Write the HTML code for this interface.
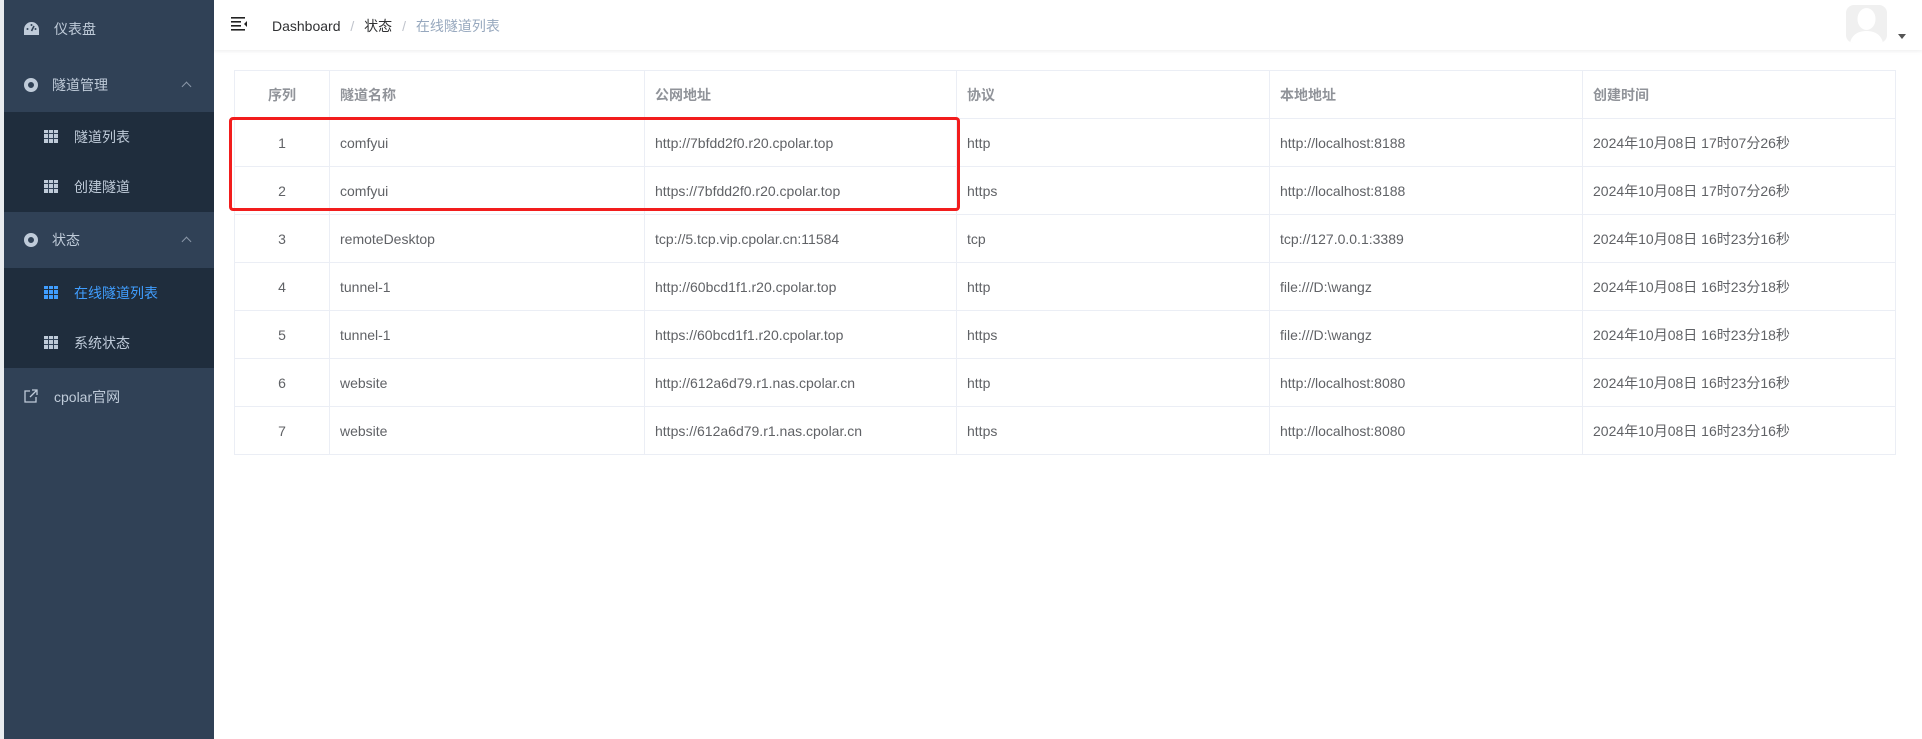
<!DOCTYPE html>
<html><head><meta charset="utf-8"><style>
*{margin:0;padding:0;box-sizing:border-box}
body{width:1922px;height:739px;background:#fff;font-family:"Liberation Sans","Noto Sans CJK SC",sans-serif;font-size:14px;position:relative;overflow:hidden}
.sb{position:absolute;left:0;top:0;width:214px;height:739px;background:#304156;border-left:4px solid #e9ecef}
.it{position:absolute;left:0;width:210px;color:#bfcbd9;height:56px;line-height:56px}
.sub{position:absolute;left:0;width:210px;background:#1f2d3d}
.sub div{height:50px;line-height:50px;color:#bfcbd9;padding-left:70px;position:relative}
.sub div i{position:absolute;left:40px;top:18px;width:14px;height:13px;background:
linear-gradient(90deg,transparent 4px,#304156 4px,#304156 5px,transparent 5px,transparent 9px,#304156 9px,#304156 10px,transparent 10px),
linear-gradient(#bfcbd9 0,#bfcbd9 3px,#304156 3px,#304156 4px,#bfcbd9 4px,#bfcbd9 8px,#304156 8px,#304156 9px,#bfcbd9 9px)}
.sub div.act{color:#409eff}
.sub div.act i{background:
linear-gradient(90deg,transparent 4px,#1f2d3d 4px,#1f2d3d 5px,transparent 5px,transparent 9px,#1f2d3d 9px,#1f2d3d 10px,transparent 10px),
linear-gradient(#409eff 0,#409eff 3px,#1f2d3d 3px,#1f2d3d 4px,#409eff 4px,#409eff 8px,#1f2d3d 8px,#1f2d3d 9px,#409eff 9px)}
.ring{position:absolute;left:20px;top:21px;width:14px;height:14px;border-radius:50%;border:4px solid #bfcbd9}
.car{position:absolute;right:24px;top:26px;width:7px;height:7px;border-left:1px solid #8a97a8;border-top:1px solid #8a97a8;transform:rotate(45deg)}
.hd{position:absolute;left:214px;top:0;width:1708px;height:50px;background:#fff;box-shadow:0 1px 4px rgba(0,21,41,.08)}
table{position:absolute;left:234px;top:70px;width:1662px;border-collapse:collapse;color:#606266}
td,th{border:1px solid #ebeef5;height:48px;padding:0 10px;text-align:left;font-weight:normal}
th{color:#909399;font-weight:bold;height:48px}
td:first-child,th:first-child{text-align:center}
.red{position:absolute;left:229px;top:117px;width:731px;height:94px;border:3px solid #f21d1d;border-radius:4px}
</style></head><body>
<div class="sb">
 <div class="it" style="top:0;padding-left:50px;height:58px;line-height:58px"><svg style="position:absolute;left:20px;top:22px" width="15" height="13" viewBox="0 0 15 13"><path d="M7.5 0A7.5 7.5 0 0 0 0 7.5V13h15V7.5A7.5 7.5 0 0 0 7.5 0z" fill="#bfcbd9"/><path d="M7.5 9L10 4" stroke="#304156" stroke-width="1.6"/><circle cx="3.5" cy="7" r="1" fill="#304156"/><circle cx="7.5" cy="3" r="1" fill="#304156"/><circle cx="11.5" cy="7" r="1" fill="#304156"/></svg>仪表盘</div>
 <div class="it" style="top:57px;padding-left:48px"><span class="ring"></span>隧道管理<span class="car"></span></div>
 <div class="sub" style="top:112px"><div><i></i>隧道列表</div><div><i></i>创建隧道</div></div>
 <div class="it" style="top:212px;padding-left:48px"><span class="ring"></span>状态<span class="car"></span></div>
 <div class="sub" style="top:268px"><div class="act"><i></i>在线隧道列表</div><div><i></i>系统状态</div></div>
 <div class="it" style="top:369px;padding-left:50px"><svg style="position:absolute;left:20px;top:20px" width="14" height="14" viewBox="0 0 14 14" fill="none" stroke="#bfcbd9" stroke-width="1.3"><path d="M6 2H1v11h11V8"/><path d="M8 1h5v5M13 1L6 8"/></svg>cpolar官网</div>
</div>
<div class="hd">
 <svg style="position:absolute;left:17px;top:17px" width="17" height="14" viewBox="0 0 17 14" fill="#222"><rect y="0" width="14" height="1.6"/><rect y="4" width="10" height="1.6"/><rect y="8" width="10" height="1.6"/><rect y="12" width="14" height="1.6"/><path d="M16 4v6l-3-3z"/></svg>
 <div style="position:absolute;left:58px;top:16px;color:#303133">Dashboard <span style="color:#c0c4cc;margin:0 6px">/</span> 状态 <span style="color:#c0c4cc;margin:0 6px">/</span> <span style="color:#97a8be">在线隧道列表</span></div>
 <div style="position:absolute;left:1632px;top:5px;width:41px;height:38px;background:#f0f0f0;border-radius:8px;overflow:hidden"><svg width="41" height="38" viewBox="0 0 41 38"><ellipse cx="20.5" cy="14" rx="9" ry="11" fill="#fff"/><path d="M4 38c2-9 9-12 16.5-12S35 29 37 38z" fill="#fff"/></svg></div>
 <div style="position:absolute;left:1684px;top:34px;border-left:4px solid transparent;border-right:4px solid transparent;border-top:5px solid #555"></div>
</div>
<table>
<colgroup><col style="width:95px"><col style="width:315px"><col style="width:312px"><col style="width:313px"><col style="width:313px"><col></colgroup>
<tr><th>序列</th><th>隧道名称</th><th>公网地址</th><th>协议</th><th>本地地址</th><th>创建时间</th></tr>
<tr><td>1</td><td>comfyui</td><td>http://7bfdd2f0.r20.cpolar.top</td><td>http</td><td>http://localhost:8188</td><td>2024年10月08日 17时07分26秒</td></tr>
<tr><td>2</td><td>comfyui</td><td>https://7bfdd2f0.r20.cpolar.top</td><td>https</td><td>http://localhost:8188</td><td>2024年10月08日 17时07分26秒</td></tr>
<tr><td>3</td><td>remoteDesktop</td><td>tcp://5.tcp.vip.cpolar.cn:11584</td><td>tcp</td><td>tcp://127.0.0.1:3389</td><td>2024年10月08日 16时23分16秒</td></tr>
<tr><td>4</td><td>tunnel-1</td><td>http://60bcd1f1.r20.cpolar.top</td><td>http</td><td>file:///D:\wangz</td><td>2024年10月08日 16时23分18秒</td></tr>
<tr><td>5</td><td>tunnel-1</td><td>https://60bcd1f1.r20.cpolar.top</td><td>https</td><td>file:///D:\wangz</td><td>2024年10月08日 16时23分18秒</td></tr>
<tr><td>6</td><td>website</td><td>http://612a6d79.r1.nas.cpolar.cn</td><td>http</td><td>http://localhost:8080</td><td>2024年10月08日 16时23分16秒</td></tr>
<tr><td>7</td><td>website</td><td>https://612a6d79.r1.nas.cpolar.cn</td><td>https</td><td>http://localhost:8080</td><td>2024年10月08日 16时23分16秒</td></tr>
</table>
<div class="red"></div>
</body></html>
